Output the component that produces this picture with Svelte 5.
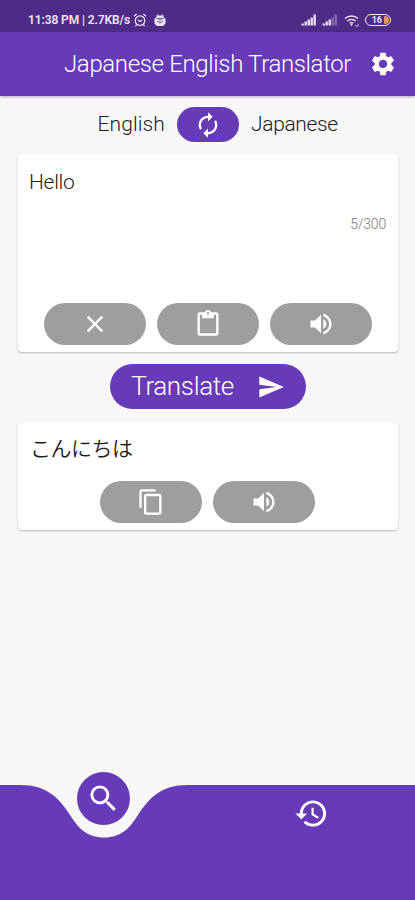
<script lang="ts">
  const icons = {
    settings:
      'M19.14 12.94c.04-.3.06-.61.06-.94 0-.32-.02-.64-.07-.94l2.03-1.58a.49.49 0 0 0 .12-.61l-1.92-3.32a.49.49 0 0 0-.59-.22l-2.39.96c-.5-.38-1.03-.7-1.62-.94l-.36-2.54a.48.48 0 0 0-.48-.41h-3.84c-.24 0-.43.17-.47.41l-.36 2.54c-.59.24-1.13.57-1.62.94l-2.39-.96a.48.48 0 0 0-.59.22L2.74 8.87c-.12.21-.08.47.12.61l2.03 1.58c-.05.3-.09.63-.09.94s.02.64.07.94l-2.03 1.58a.49.49 0 0 0-.12.61l1.92 3.32c.12.22.37.29.59.22l2.39-.96c.5.38 1.03.7 1.62.94l.36 2.54c.05.24.24.41.48.41h3.84c.24 0 .44-.17.47-.41l.36-2.54c.59-.24 1.13-.56 1.62-.94l2.39.96c.22.08.47 0 .59-.22l1.92-3.32a.48.48 0 0 0-.12-.61l-2.01-1.58zM12 15.6c-1.98 0-3.6-1.62-3.6-3.6s1.62-3.6 3.6-3.6 3.6 1.62 3.6 3.6-1.62 3.6-3.6 3.6z',
    swap: 'M12 6v3l4-4-4-4v3c-4.42 0-8 3.58-8 8 0 1.57.46 3.03 1.24 4.26L6.7 14.8A5.87 5.87 0 0 1 6 12c0-3.31 2.69-6 6-6zm6.76 1.74L17.3 9.2c.44.84.7 1.79.7 2.8 0 3.31-2.69 6-6 6v-3l-4 4 4 4v-3c4.42 0 8-3.58 8-8 0-1.57-.46-3.03-1.24-4.26z',
    clear: 'M19 6.41L17.59 5 12 10.59 6.41 5 5 6.41 10.59 12 5 17.59 6.41 19 12 13.41 17.59 19 19 17.59 13.41 12z',
    paste: 'M19 2h-4.18C14.4.84 13.3 0 12 0S9.6.84 9.18 2H5c-1.1 0-2 .9-2 2v16c0 1.1.9 2 2 2h14c1.1 0 2-.9 2-2V4c0-1.1-.9-2-2-2zm-7 0c.55 0 1 .45 1 1s-.45 1-1 1-1-.45-1-1 .45-1 1-1zm7 18H5V4h2v3h10V4h2v16z',
    speak: 'M3 9v6h4l5 5V4L7 9H3zm13.5 3A4.5 4.5 0 0 0 14 7.97v8.05A4.47 4.47 0 0 0 16.5 12zM14 3.23v2.06c2.89.86 5 3.54 5 6.71s-2.11 5.85-5 6.71v2.06c4.01-.91 7-4.49 7-8.77s-2.99-7.86-7-8.77z',
    copy: 'M16 1H4c-1.1 0-2 .9-2 2v14h2V3h12V1zm3 4H8c-1.1 0-2 .9-2 2v14c0 1.1.9 2 2 2h11c1.1 0 2-.9 2-2V7c0-1.1-.9-2-2-2zm0 16H8V7h11v14z',
    send: 'M2.01 21L23 12 2.01 3 2 10l15 2-15 2z',
    search: 'M15.5 14h-.79l-.28-.27A6.47 6.47 0 0 0 16 9.5 6.5 6.5 0 1 0 9.5 16c1.61 0 3.09-.59 4.23-1.57l.27.28v.79l5 4.99L20.49 19l-4.99-5zm-6 0C7.01 14 5 11.99 5 9.5S7.01 5 9.5 5 14 7.01 14 9.5 11.99 14 9.5 14z',
    history: 'M13 3a9 9 0 0 0-9 9H1l3.89 3.89.07.14L9 12H6c0-3.87 3.13-7 7-7s7 3.13 7 7-3.13 7-7 7c-1.93 0-3.68-.79-4.94-2.06l-1.42 1.42A8.95 8.95 0 0 0 13 21a9 9 0 0 0 0-18zm-1 5v5l4.28 2.54.72-1.21-3.5-2.08V8H12z'
  };

  const limit = 300;
  let source = $state('Hello');
  let result = $state('こんにちは');
  let langs = $state(['English', 'Japanese']);

  function swapLanguages() {
    langs = [langs[1], langs[0]];
    [source, result] = [result, source];
  }
</script>

{#snippet icon(name: keyof typeof icons)}
  <svg class="icon {name}" viewBox="0 0 24 24" aria-hidden="true"><path d={icons[name]} /></svg>
{/snippet}

{#snippet signal(lit: number)}
  <svg class="signal" viewBox="0 0 16 12">
    {#each [2, 4, 6, 8, 11] as h, i}
      <rect x={i * 3 + 0.5} y={11.5 - h} width="2.4" height={h} opacity={i < lit ? 0.95 : 0.35} />
    {/each}
  </svg>
{/snippet}

<div class="app">
  <div class="status">
    <span class="clock">11:38 PM | 2.7KB/s</span>
    <svg class="alarm" viewBox="0 0 14 14">
      <circle cx="7" cy="7.6" r="4.8" />
      <path d="M1 3.3L3.6 1M13 3.3L10.4 1M4.8 6.8L7 8.6l2.2-1.6M3.6 11.6l-1.2 1.4M10.4 11.6l1.2 1.4" />
    </svg>
    <svg class="bug" viewBox="0 0 12 14">
      <path class="body" d="M3 1l1.5 1.5h3L9 1l.6 3.2L11.5 6v4.5L9 13H3L.5 10.5V6l1.9-1.8z" />
      <path class="lines" d="M2.5 5.5h7M3 8l3 2 3-2M4.5 7h3" />
    </svg>
    <div class="status-right">
      {@render signal(5)}
      {@render signal(3)}
      <svg class="wifi" viewBox="0 0 16 13">
        <path d="M1 4.5a10 10 0 0 1 13 0M3.3 7a6.5 6.5 0 0 1 8.4 0M5.7 9.2a3.2 3.2 0 0 1 3.6 0" />
        <circle cx="7.5" cy="10.8" r="1" />
        <path class="arrow" d="M11.5 11l1.5 1.5 1.5-2" />
      </svg>
      <div class="battery"><span>16</span><i></i></div>
    </div>
  </div>

  <header>
    <h1>Japanese English Translator</h1>
    <button aria-label="Settings">{@render icon('settings')}</button>
  </header>

  <main>
    <div class="languages">
      <span class="from">{langs[0]}</span>
      <button class="swap-btn" aria-label="Swap languages" onclick={swapLanguages}>{@render icon('swap')}</button>
      <span class="to">{langs[1]}</span>
    </div>

    <section class="card input-card">
      <p class="text">{source}</p>
      <span class="count">{source.length}/{limit}</span>
      <div class="actions">
        <button class="pill" aria-label="Clear" onclick={() => (source = '')}>{@render icon('clear')}</button>
        <button class="pill" aria-label="Paste">{@render icon('paste')}</button>
        <button class="pill" aria-label="Listen">{@render icon('speak')}</button>
      </div>
    </section>

    <button class="translate"><span>Translate</span>{@render icon('send')}</button>

    <section class="card output-card">
      <p class="text">{result}</p>
      <div class="actions">
        <button class="pill" aria-label="Copy">{@render icon('copy')}</button>
        <button class="pill" aria-label="Listen">{@render icon('speak')}</button>
      </div>
    </section>
  </main>

  <nav>
    <svg class="nav-shape" viewBox="0 0 415 115" preserveAspectRatio="none">
      <path d="M0 0H20C47 0 59 13 70 30C79 44 87 52.5 104 52.5C121 52.5 129 44 138 30C149 13 161 0 188 0H415V115H0Z" />
    </svg>
    <button class="tab" aria-label="Translate"><span class="bubble">{@render icon('search')}</span></button>
    <button class="tab" aria-label="History">{@render icon('history')}</button>
  </nav>
</div>

<style>
  :global(body) {
    margin: 0;
  }

  .app {
    display: flex;
    flex-direction: column;
    height: 900px;
    overflow: hidden;
    background: #f7f7f7;
    color: #1c1c1c;
    font-family: Roboto, 'Noto Sans CJK JP', sans-serif;
    font-weight: 300;
  }

  button {
    display: flex;
    align-items: center;
    justify-content: center;
    margin: 0;
    padding: 0;
    border: none;
    background: none;
    color: #fff;
    font: inherit;
    cursor: pointer;
  }

  .icon {
    width: 28px;
    height: 28px;
    flex: none;
    fill: #fff;
  }

  .status {
    display: flex;
    align-items: center;
    box-sizing: border-box;
    height: 32px;
    padding: 8px 24px 0 28px;
    background: #4d2b87;
    color: #eee5f7;
  }

  .clock {
    font-size: 12px;
    font-weight: 600;
    letter-spacing: -0.1px;
    white-space: nowrap;
  }

  .alarm {
    width: 14px;
    height: 14px;
    margin-left: 3px;
    fill: none;
    stroke: #eee5f7;
    stroke-width: 1.2;
  }

  .bug {
    width: 12px;
    height: 14px;
    margin-left: 7px;
  }

  .bug .body {
    fill: #eee5f7;
  }

  .bug .lines {
    fill: none;
    stroke: #4d2b87;
    stroke-width: 0.8;
  }

  .status-right {
    display: flex;
    align-items: center;
    margin-left: auto;
  }

  .signal {
    width: 16px;
    height: 12px;
    margin-right: 5px;
    fill: #eee5f7;
  }

  .wifi {
    width: 16px;
    height: 13px;
    margin: 0 5px 0 1px;
    fill: none;
    stroke: #eee5f7;
    stroke-width: 1.5;
  }

  .wifi circle {
    fill: #eee5f7;
    stroke: none;
  }

  .wifi .arrow {
    stroke-width: 1;
  }

  .battery {
    display: flex;
    align-items: center;
    justify-content: flex-end;
    box-sizing: border-box;
    width: 26px;
    height: 12px;
    padding-right: 1px;
    border: 1.5px solid #eee5f7;
    border-radius: 6px;
    font-size: 9px;
    font-weight: 700;
  }

  .battery i {
    width: 5px;
    height: 8px;
    margin-left: 2px;
    border-radius: 1px 4px 4px 1px;
    background: #e39a55;
  }

  header {
    display: flex;
    align-items: center;
    justify-content: space-between;
    box-sizing: border-box;
    height: 64px;
    padding: 0 18px 0 64px;
    background: #673ab7;
    color: #fff;
    box-shadow: 0 1px 3px rgba(60, 30, 110, 0.35);
  }

  h1 {
    margin: 0;
    font-size: 24px;
    font-weight: 300;
    letter-spacing: -0.35px;
    white-space: nowrap;
  }

  main {
    display: flex;
    flex: 1;
    flex-direction: column;
    align-items: center;
    padding: 11px 17px 0 18px;
  }

  .languages {
    display: grid;
    grid-template-columns: 1fr 62px 1fr;
    align-items: center;
    column-gap: 12px;
    width: 100%;
    height: 35px;
    font-size: 21px;
    line-height: 33px;
  }

  .languages span {
    padding-bottom: 1px;
  }

  .from {
    letter-spacing: 0.1px;
    text-align: right;
  }

  .to {
    letter-spacing: -0.35px;
  }

  .swap-btn {
    height: 35px;
    border-radius: 18px;
    background: #673ab7;
  }

  .card {
    display: flex;
    flex-direction: column;
    box-sizing: border-box;
    width: 100%;
    padding: 0 12px 7px 11px;
    border-radius: 4px;
    background: #fff;
    box-shadow: 0 1px 2px rgba(0, 0, 0, 0.25);
  }

  .input-card {
    height: 198px;
    margin-top: 12px;
  }

  .output-card {
    height: 108px;
    margin-top: 13px;
  }

  .text {
    margin: 16px 0 0;
    font-size: 21px;
    line-height: 25px;
    letter-spacing: -0.3px;
  }

  .output-card .text {
    margin-top: 15px;
    padding-left: 1px;
    font-weight: 350;
    letter-spacing: -0.5px;
  }

  .count {
    margin-top: 20px;
    color: #777;
    font-size: 14px;
    line-height: 18px;
    letter-spacing: -0.2px;
    text-align: right;
  }

  .actions {
    display: flex;
    justify-content: center;
    gap: 11px;
    margin-top: auto;
  }

  .pill {
    width: 102px;
    height: 42px;
    border-radius: 21px;
    background: #9e9e9e;
  }

  .translate {
    gap: 23px;
    width: 196px;
    height: 45px;
    margin-top: 12px;
    border-radius: 23px;
    background: #673ab7;
    font-size: 26px;
    letter-spacing: -0.35px;
  }

  .translate span {
    padding-bottom: 2px;
  }

  nav {
    position: relative;
    display: grid;
    grid-template-columns: 1fr 1fr;
    height: 115px;
  }

  .nav-shape {
    position: absolute;
    inset: 0;
    width: 100%;
    height: 100%;
    fill: #673ab7;
  }

  .tab {
    position: relative;
    height: 57px;
  }

  .bubble {
    display: flex;
    align-items: center;
    justify-content: center;
    width: 53px;
    height: 53px;
    margin-bottom: 30px;
    border-radius: 50%;
    background: #673ab7;
  }

  .search,
  .history {
    width: 35px;
    height: 35px;
  }
</style>
